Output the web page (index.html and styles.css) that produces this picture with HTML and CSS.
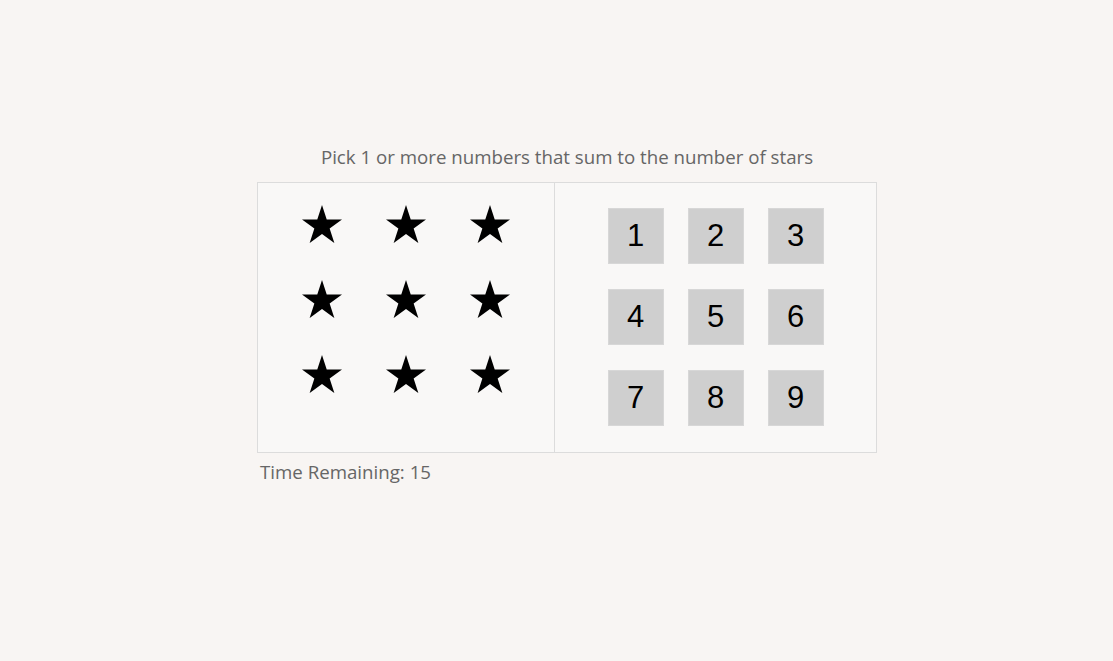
FILE: index.html
```html
<!DOCTYPE html>
<html>
<head>
<meta charset="utf-8">
<link rel="stylesheet" href="styles.css">
</head>
<body>
<div class="game">
  <div class="help">Pick 1 or more numbers that sum to the number of stars</div>
  <div class="board">
    <div class="left">
      <div class="stars">
        <svg class="star" viewBox="0 0 40 38"><polygon points="20,0 24.72,14.53 40,14.53 27.64,23.51 32.36,38.04 20,29.06 7.64,38.04 12.36,23.51 0,14.53 15.28,14.53"/></svg>
        <svg class="star" viewBox="0 0 40 38"><polygon points="20,0 24.72,14.53 40,14.53 27.64,23.51 32.36,38.04 20,29.06 7.64,38.04 12.36,23.51 0,14.53 15.28,14.53"/></svg>
        <svg class="star" viewBox="0 0 40 38"><polygon points="20,0 24.72,14.53 40,14.53 27.64,23.51 32.36,38.04 20,29.06 7.64,38.04 12.36,23.51 0,14.53 15.28,14.53"/></svg>
        <svg class="star" viewBox="0 0 40 38"><polygon points="20,0 24.72,14.53 40,14.53 27.64,23.51 32.36,38.04 20,29.06 7.64,38.04 12.36,23.51 0,14.53 15.28,14.53"/></svg>
        <svg class="star" viewBox="0 0 40 38"><polygon points="20,0 24.72,14.53 40,14.53 27.64,23.51 32.36,38.04 20,29.06 7.64,38.04 12.36,23.51 0,14.53 15.28,14.53"/></svg>
        <svg class="star" viewBox="0 0 40 38"><polygon points="20,0 24.72,14.53 40,14.53 27.64,23.51 32.36,38.04 20,29.06 7.64,38.04 12.36,23.51 0,14.53 15.28,14.53"/></svg>
        <svg class="star" viewBox="0 0 40 38"><polygon points="20,0 24.72,14.53 40,14.53 27.64,23.51 32.36,38.04 20,29.06 7.64,38.04 12.36,23.51 0,14.53 15.28,14.53"/></svg>
        <svg class="star" viewBox="0 0 40 38"><polygon points="20,0 24.72,14.53 40,14.53 27.64,23.51 32.36,38.04 20,29.06 7.64,38.04 12.36,23.51 0,14.53 15.28,14.53"/></svg>
        <svg class="star" viewBox="0 0 40 38"><polygon points="20,0 24.72,14.53 40,14.53 27.64,23.51 32.36,38.04 20,29.06 7.64,38.04 12.36,23.51 0,14.53 15.28,14.53"/></svg>
      </div>
    </div>
    <div class="right">
      <div class="numbers">
        <button class="number">1</button>
        <button class="number">2</button>
        <button class="number">3</button>
        <button class="number">4</button>
        <button class="number">5</button>
        <button class="number">6</button>
        <button class="number">7</button>
        <button class="number">8</button>
        <button class="number">9</button>
      </div>
    </div>
  </div>
  <div class="timer">Time Remaining: 15</div>
</div>
</body>
</html>
```
FILE: styles.css
```css
html, body {
  margin: 0;
  padding: 0;
  background: #f8f5f3;
}
body {
  font-family: "Open Sans", "Noto Sans", sans-serif;
  color: #666;
}
.game {
  width: 620px;
  margin-left: 257px;
  padding-top: 145px;
}
.help {
  font-size: 18.7px;
  line-height: 24px;
  text-align: center;
  margin-bottom: 13px;
}
.board {
  display: flex;
  height: 271px;
}
.left, .right {
  box-sizing: border-box;
  border: 1px solid #dcdcdc;
  background: #f9f8f7;
  display: flex;
  justify-content: center;
  align-items: flex-start;
}
.left {
  width: 298px;
  padding-top: 22px;
}
.right {
  width: 322px;
  border-left: none;
  padding-top: 25px;
}
.stars {
  display: grid;
  grid-template-columns: repeat(3, 40px);
  column-gap: 44px;
  row-gap: 37px;
}
.star {
  display: block;
  width: 40px;
  height: 38px;
  fill: #000;
}
.numbers {
  display: grid;
  grid-template-columns: repeat(3, 56px);
  column-gap: 24px;
  row-gap: 25px;
}
.number {
  box-sizing: border-box;
  width: 56px;
  height: 56px;
  margin: 0;
  padding: 0;
  background: #cfcfcf;
  border: 1px solid #d7d7d7;
  font-family: "Liberation Sans", Arial, sans-serif;
  font-size: 31px;
  color: #000;
  line-height: 54px;
}
.timer {
  font-size: 18.7px;
  line-height: 25px;
  margin-top: 6px;
  margin-left: 3px;
}
```
